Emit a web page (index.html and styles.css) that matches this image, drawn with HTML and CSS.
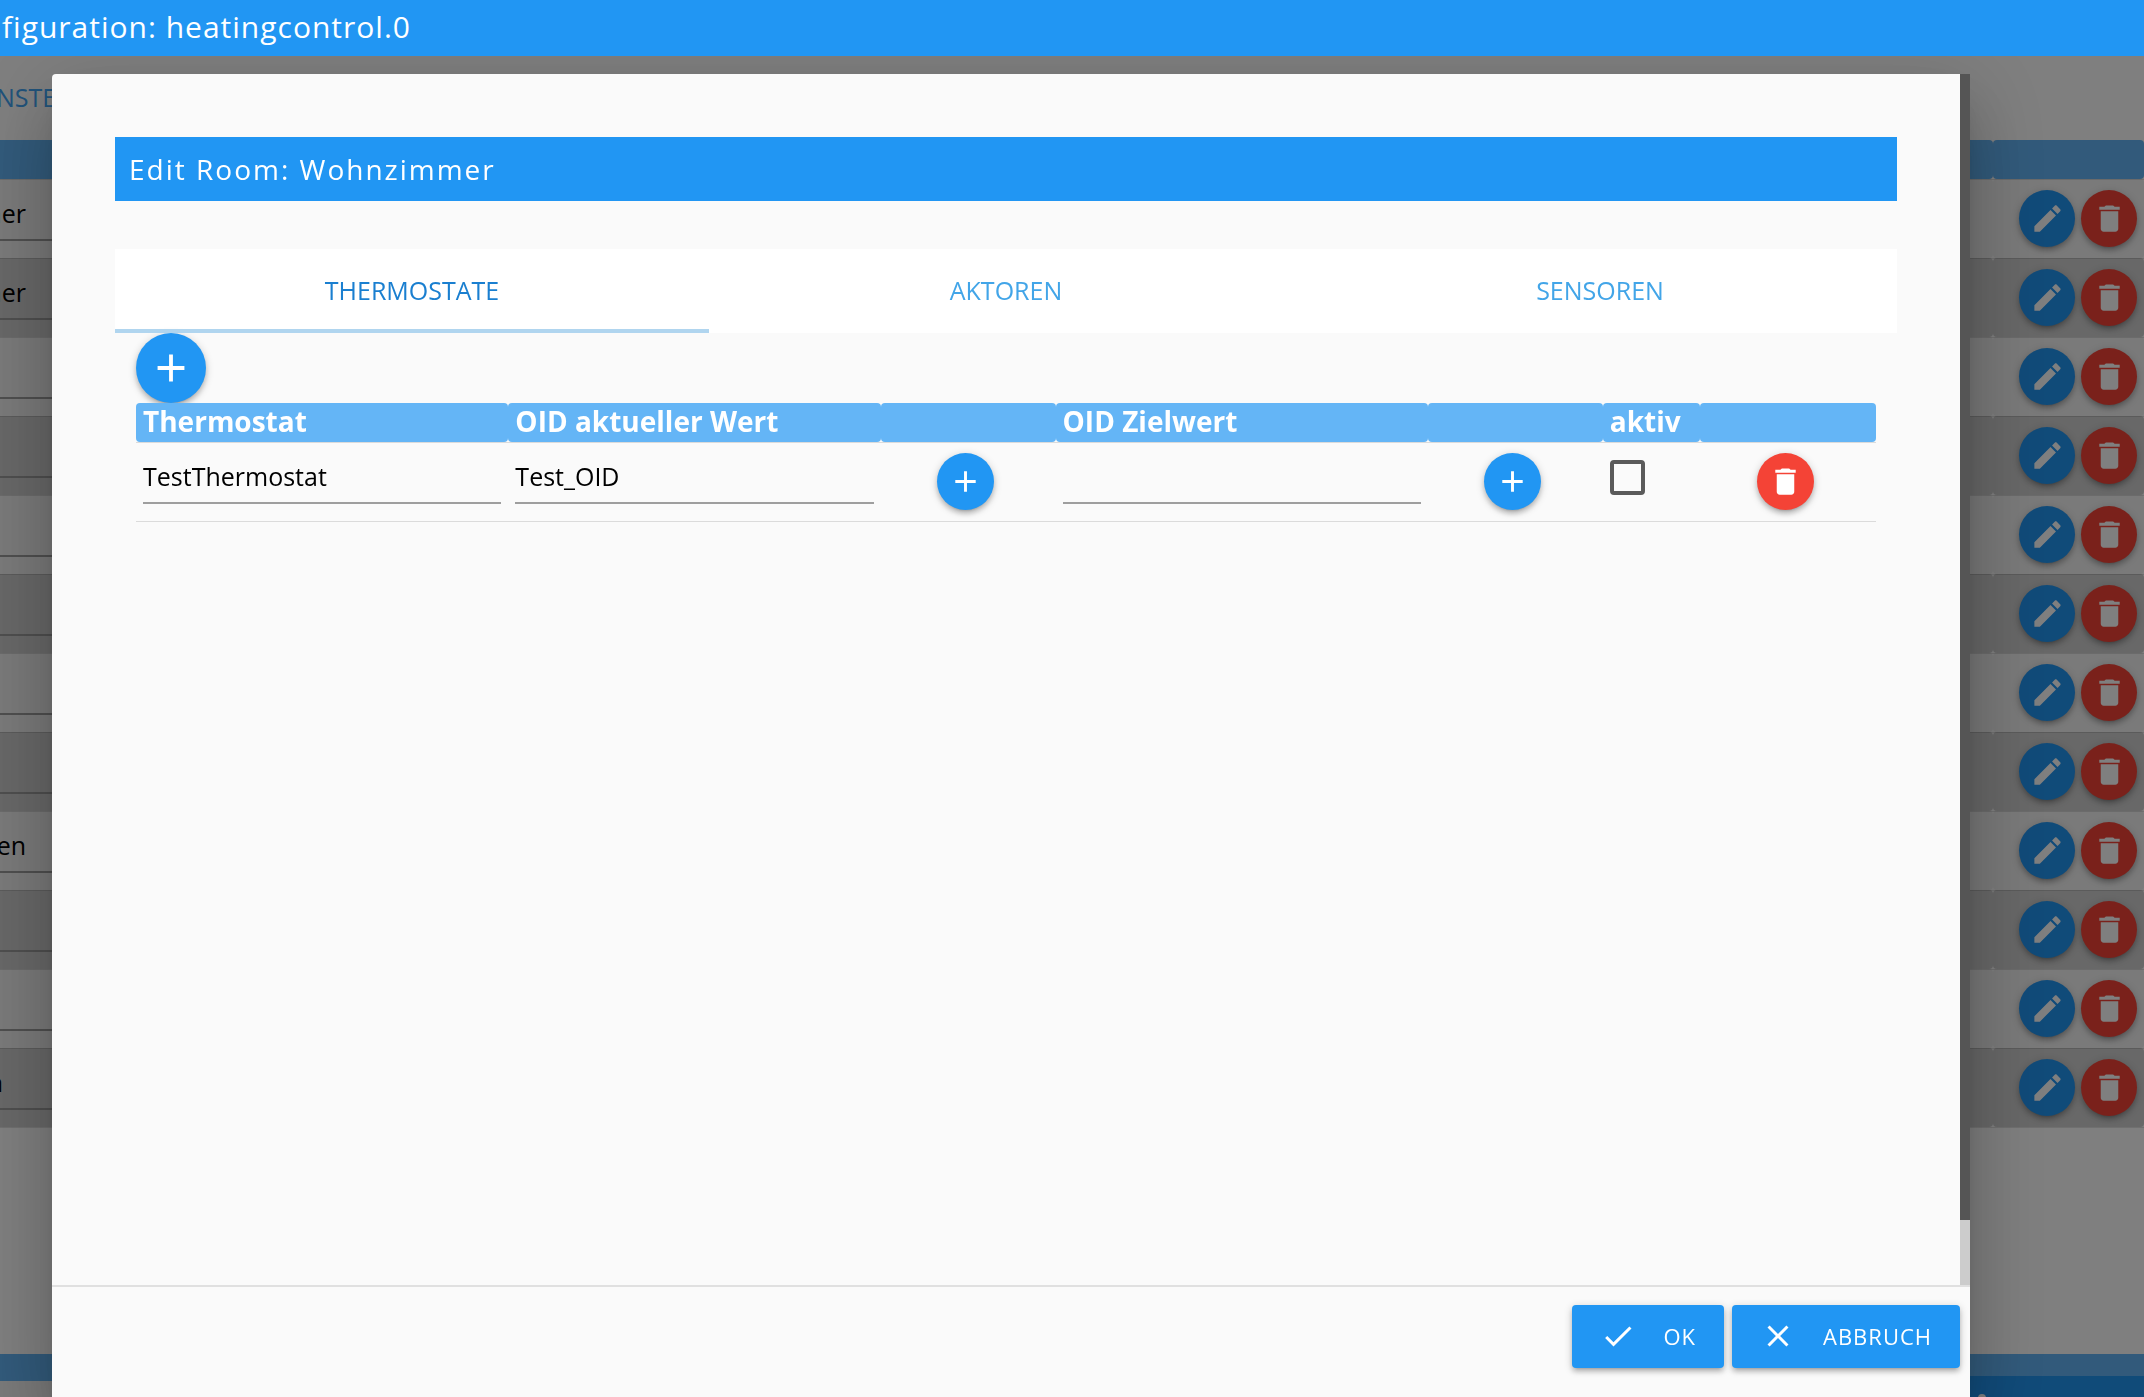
FILE: index.html
```html
<!DOCTYPE html>
<html lang="de">
<head>
<meta charset="utf-8">
<title>heatingcontrol.0</title>
<link rel="stylesheet" href="styles.css">
</head>
<body>
<svg class="sprite" aria-hidden="true">
  <symbol id="add" viewBox="0 0 24 24"><path d="M19 13h-6v6h-2v-6H5v-2h6V5h2v6h6v2z"/></symbol>
  <symbol id="delete" viewBox="0 0 24 24"><path d="M6 19c0 1.1.9 2 2 2h8c1.1 0 2-.9 2-2V7H6v12zM19 4h-3.500l-1-1h-5l-1 1H5v2h14V4z"/></symbol>
  <symbol id="edit" viewBox="0 0 24 24"><path d="M3 17.250V21h3.750L17.810 9.940l-3.750-3.750L3 17.250zM20.710 7.040c.39-.39.39-1.020 0-1.410l-2.340-2.340c-.39-.39-1.020-.39-1.410 0l-1.830 1.830 3.750 3.750 1.830-1.830z"/></symbol>
  <symbol id="check" viewBox="0 0 24 24"><path d="M9 16.170L4.830 12l-1.420 1.410L9 19 21 7l-1.410-1.410z"/></symbol>
  <symbol id="close" viewBox="0 0 24 24"><path d="M19 6.410L17.590 5 12 10.590 6.410 5 5 6.410 10.590 12 5 17.590 6.410 19 12 13.410 17.590 19 19 17.590 13.410 12z"/></symbol>
</svg>

<div class="page">
  <header class="app-bar">figuration: heatingcontrol.0</header>
  <nav class="page-tabs"><a href="#fenster">NSTER</a></nav>
  <table class="rooms">
    <colgroup><col><col class="col-actions"></colgroup>
    <thead><tr><th></th><th></th></tr></thead>
    <tbody id="rooms"></tbody>
  </table>
  <footer class="page-footer">
    <div class="footer-band"></div>
    <div class="footer-save"><svg viewBox="0 0 12 12"><circle cx="6" cy="6" r="4"/></svg></div>
  </footer>
</div>

<div class="overlay">
  <section class="dialog" role="dialog" aria-labelledby="dialog-title">
    <div class="dialog-body">
      <div class="dialog-content">
        <h1 class="dialog-title" id="dialog-title">Edit Room: Wohnzimmer</h1>
        <nav class="tabs">
          <a class="tab active" href="#thermostate">THERMOSTATE</a>
          <a class="tab" href="#aktoren">AKTOREN</a>
          <a class="tab" href="#sensoren">SENSOREN</a>
        </nav>
        <div class="panel">
          <button class="round large" type="button" aria-label="Thermostat hinzufügen"><svg><use href="#add"/></svg></button>
          <table class="devices">
            <colgroup><col class="wide"><col class="wide"><col class="action"><col class="wide"><col class="action"><col class="flag"><col></colgroup>
            <thead>
              <tr><th>Thermostat</th><th>OID aktueller Wert</th><th></th><th>OID Zielwert</th><th></th><th>aktiv</th><th></th></tr>
            </thead>
            <tbody>
              <tr>
                <td><input class="field" type="text" value="TestThermostat" aria-label="Thermostat"></td>
                <td><input class="field" type="text" value="Test_OID" aria-label="OID aktueller Wert"></td>
                <td class="center"><button class="round" type="button" aria-label="OID wählen"><svg><use href="#add"/></svg></button></td>
                <td><input class="field" type="text" aria-label="OID Zielwert"></td>
                <td class="center"><button class="round" type="button" aria-label="Zielwert wählen"><svg><use href="#add"/></svg></button></td>
                <td><input class="tick" type="checkbox" aria-label="aktiv"></td>
                <td class="center"><button class="round red" type="button" aria-label="Löschen"><svg><use href="#delete"/></svg></button></td>
              </tr>
            </tbody>
          </table>
        </div>
      </div>
      <div class="scroll-track" aria-hidden="true"><div class="scroll-thumb"></div></div>
    </div>
    <footer class="dialog-footer">
      <button class="action-button" type="button"><svg><use href="#check"/></svg>OK</button>
      <button class="action-button" type="button"><svg><use href="#close"/></svg>ABBRUCH</button>
    </footer>
  </section>
</div>
<script src="rooms.js"></script>
</body>
</html>
```
FILE: styles.css
```css
* { box-sizing: border-box; }
html, body { height: 100%; }
body {
  margin: 0;
  overflow: hidden;
  background: #fff;
  color: #000;
  font-family: "Open Sans", "Noto Sans", sans-serif;
  font-size: 25px;
}
button, input { font: inherit; }
a { text-decoration: none; }
svg { display: block; fill: currentColor; }
.sprite { position: absolute; width: 0; height: 0; }
table { width: 100%; border-collapse: collapse; border-spacing: 0; table-layout: fixed; }
th, td { padding: 0 7px; border-radius: 4px; text-align: left; }
tr { border-bottom: 1px solid rgba(0, 0, 0, .12); }
th {
  height: 39px;
  background: #64b5f6;
  color: #fff;
  font-size: 28px;
  font-weight: 700;
  line-height: 36px;
  vertical-align: top;
}
td { height: 79px; vertical-align: top; }

/* page behind the dialog */
.page { display: flex; flex-direction: column; min-height: 100vh; }
.app-bar {
  position: relative;
  z-index: 2;
  height: 56px;
  padding-left: 2px;
  background: #2196f3;
  color: #fff;
  font-size: 30px;
  line-height: 54px;
  letter-spacing: 1px;
}
.page-tabs { height: 84px; line-height: 82px; }
.page-tabs a { color: #42a5f5; margin-left: -4px; }
.rooms { margin-bottom: auto; }
.col-actions { width: 151px; }
.rooms tbody tr:nth-child(odd) { background: #f4f4f4; }
.rooms tbody tr:nth-child(even) { background: #d0d0d0; }
.rooms th:first-child, .rooms td:first-child { padding-left: 0; border-radius: 0 4px 4px 0; }
.rooms .field { width: 126px; margin-left: -26px; padding-right: 74px; text-align: right; }
.rooms .field.short { padding-right: 97px; }
.row-actions { display: flex; gap: 6px; padding: 10px 0 0 19px; }
.page-footer { display: flex; height: 43px; background: #f4f4f4; }
.footer-band { flex: 1; height: 27px; background: #64b5f6; }
.footer-save { flex: 1; border-top: 22px solid #64b5f6; background: #2196f3; color: #fff; }
.footer-save svg { width: 12px; margin: 16px 156px 0 auto; }

.overlay {
  position: fixed;
  inset: 0;
  z-index: 1;
  display: flex;
  padding: 74px 174px 0 52px;
  background: rgba(0, 0, 0, .5);
}
.dialog {
  display: flex;
  flex: 1;
  flex-direction: column;
  border-radius: 4px 4px 0 0;
  background: #fafafa;
  box-shadow: 0 42px 67px 5px rgba(0, 0, 0, .14), 0 16px 81px 14px rgba(0, 0, 0, .12), 0 19px 26px -12px rgba(0, 0, 0, .2);
}
.dialog-body { display: flex; flex: 1; min-height: 0; }
.dialog-content { flex: 1; min-width: 0; padding: 63px; }
.scroll-track { width: 10px; background: #ccc; }
.scroll-thumb { height: 94.6%; background: #555; }
.dialog-title {
  margin: 0;
  padding-left: 14px;
  background: #2196f3;
  color: #fff;
  font-size: 28px;
  font-weight: 500;
  line-height: 64px;
  letter-spacing: 2px;
}
.tabs { display: flex; height: 84px; margin-top: 48px; background: #fff; }
.tab { flex: 1; line-height: 82px; text-align: center; color: #42a5e8; }
.tab.active { border-bottom: 4px solid #b0d5ef; color: #1a7fd0; }
.panel { padding: 0 21px; }

.round {
  display: inline-flex;
  align-items: center;
  justify-content: center;
  width: 57px;
  height: 57px;
  padding: 0;
  border: 0;
  border-radius: 50%;
  background: #2196f3;
  color: #fff;
  box-shadow: 0 4px 4px rgba(0, 0, 0, .14), 0 5px 2px -4px rgba(0, 0, 0, .12), 0 2px 9px rgba(0, 0, 0, .2);
}
.round svg { width: 35px; height: 35px; }
.round.large { display: flex; width: 70px; height: 70px; }
.round.large svg { width: 46px; height: 46px; }
.round.red { background: #f44336; }

.wide { width: 21.4%; }
.action { width: 10.05%; }
.flag { width: 5.6%; }
.center { padding: 10px 12px 0 7px; text-align: center; }
.field {
  display: block;
  width: 100%;
  height: 61px;
  padding: 7px 0 0;
  border: 0;
  border-bottom: 2px solid #9e9e9e;
  background: none;
  color: #000;
}
.tick {
  display: block;
  width: 35px;
  height: 35px;
  margin: 17px 0 0;
  border: 4px solid #5a5a5a;
  border-radius: 4px;
  appearance: none;
}

.dialog-footer {
  display: flex;
  justify-content: flex-end;
  gap: 8px;
  height: 112px;
  padding: 18px 10px 0;
  border-top: 2px solid #e0e0e0;
}
.action-button {
  display: flex;
  align-items: center;
  gap: 27px;
  height: 63px;
  padding: 0 28px 2px;
  border: 0;
  border-radius: 4px;
  background: #2196f3;
  color: #fff;
  font-size: 22px;
  font-weight: 500;
  letter-spacing: 1px;
  box-shadow: 0 4px 4px rgba(0, 0, 0, .14), 0 5px 2px -4px rgba(0, 0, 0, .12), 0 2px 9px rgba(0, 0, 0, .2);
}
.action-button svg { width: 36px; height: 36px; }
```
FILE: rooms.js
```js
const rooms = ["mer", "mer", "", "", "", "", "", "", "en", "", "", "n"];

document.getElementById("rooms").innerHTML = rooms.map((name) => `
  <tr>
    <td><input class="field${name === "n" ? " short" : ""}" type="text" value="${name}" aria-label="Raum"></td>
    <td>
      <div class="row-actions">
        <button class="round" type="button" aria-label="Bearbeiten"><svg><use href="#edit"/></svg></button>
        <button class="round red" type="button" aria-label="Löschen"><svg><use href="#delete"/></svg></button>
      </div>
    </td>
  </tr>`).join("");
```
